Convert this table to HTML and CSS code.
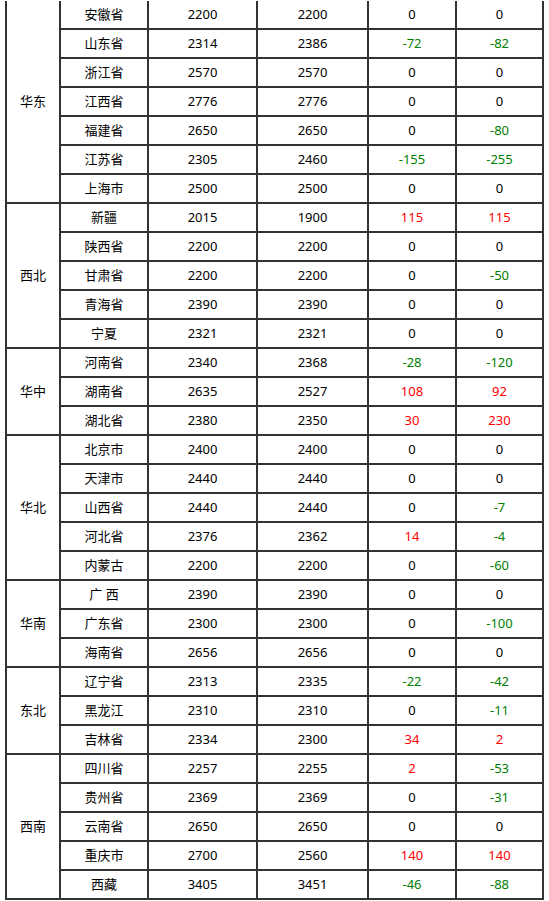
FILE: index.html
```html
<!DOCTYPE html>
<html lang="zh-CN">
<head>
<meta charset="utf-8">
<title>价格表</title>
<link rel="stylesheet" href="styles.css">
</head>
<body>
<table class="price-table">
<colgroup>
<col class="c1"><col class="c2"><col class="c3"><col class="c4"><col class="c5"><col class="c6">
</colgroup>
<tbody>
<tr><td rowspan="7">华东</td><td>安徽省</td><td>2200</td><td>2200</td><td>0</td><td>0</td></tr>
<tr><td>山东省</td><td>2314</td><td>2386</td><td class="down">-72</td><td class="down">-82</td></tr>
<tr><td>浙江省</td><td>2570</td><td>2570</td><td>0</td><td>0</td></tr>
<tr><td>江西省</td><td>2776</td><td>2776</td><td>0</td><td>0</td></tr>
<tr><td>福建省</td><td>2650</td><td>2650</td><td>0</td><td class="down">-80</td></tr>
<tr><td>江苏省</td><td>2305</td><td>2460</td><td class="down">-155</td><td class="down">-255</td></tr>
<tr><td>上海市</td><td>2500</td><td>2500</td><td>0</td><td>0</td></tr>
<tr><td rowspan="5">西北</td><td>新疆</td><td>2015</td><td>1900</td><td class="up">115</td><td class="up">115</td></tr>
<tr><td>陕西省</td><td>2200</td><td>2200</td><td>0</td><td>0</td></tr>
<tr><td>甘肃省</td><td>2200</td><td>2200</td><td>0</td><td class="down">-50</td></tr>
<tr><td>青海省</td><td>2390</td><td>2390</td><td>0</td><td>0</td></tr>
<tr><td>宁夏</td><td>2321</td><td>2321</td><td>0</td><td>0</td></tr>
<tr><td rowspan="3">华中</td><td>河南省</td><td>2340</td><td>2368</td><td class="down">-28</td><td class="down">-120</td></tr>
<tr><td>湖南省</td><td>2635</td><td>2527</td><td class="up">108</td><td class="up">92</td></tr>
<tr><td>湖北省</td><td>2380</td><td>2350</td><td class="up">30</td><td class="up">230</td></tr>
<tr><td rowspan="5">华北</td><td>北京市</td><td>2400</td><td>2400</td><td>0</td><td>0</td></tr>
<tr><td>天津市</td><td>2440</td><td>2440</td><td>0</td><td>0</td></tr>
<tr><td>山西省</td><td>2440</td><td>2440</td><td>0</td><td class="down">-7</td></tr>
<tr><td>河北省</td><td>2376</td><td>2362</td><td class="up">14</td><td class="down">-4</td></tr>
<tr><td>内蒙古</td><td>2200</td><td>2200</td><td>0</td><td class="down">-60</td></tr>
<tr><td rowspan="3">华南</td><td>广 西</td><td>2390</td><td>2390</td><td>0</td><td>0</td></tr>
<tr><td>广东省</td><td>2300</td><td>2300</td><td>0</td><td class="down">-100</td></tr>
<tr><td>海南省</td><td>2656</td><td>2656</td><td>0</td><td>0</td></tr>
<tr><td rowspan="3">东北</td><td>辽宁省</td><td>2313</td><td>2335</td><td class="down">-22</td><td class="down">-42</td></tr>
<tr><td>黑龙江</td><td>2310</td><td>2310</td><td>0</td><td class="down">-11</td></tr>
<tr><td>吉林省</td><td>2334</td><td>2300</td><td class="up">34</td><td class="up">2</td></tr>
<tr><td rowspan="5">西南</td><td>四川省</td><td>2257</td><td>2255</td><td class="up">2</td><td class="down">-53</td></tr>
<tr><td>贵州省</td><td>2369</td><td>2369</td><td>0</td><td class="down">-31</td></tr>
<tr><td>云南省</td><td>2650</td><td>2650</td><td>0</td><td>0</td></tr>
<tr><td>重庆市</td><td>2700</td><td>2560</td><td class="up">140</td><td class="up">140</td></tr>
<tr><td>西藏</td><td>3405</td><td>3451</td><td class="down">-46</td><td class="down">-88</td></tr>
</tbody>
</table>
</body>
</html>
```
FILE: styles.css
```css
html, body {
  margin: 0;
  padding: 0;
  background: #fff;
}

.price-table {
  margin: 1px 0 0 5px;
  width: 539px;
  table-layout: fixed;
  border-collapse: separate;
  border-spacing: 0;
  border-left: 2px solid #333;
  font-family: "Noto Sans", "Noto Sans CJK SC", sans-serif;
  font-size: 13px;
  color: #000;
}

.c1 { width: 54px; }
.c2 { width: 88px; }
.c3 { width: 109px; }
.c4 { width: 111px; }
.c5 { width: 88px; }
.c6 { width: 87px; }

.price-table td {
  border-right: 2px solid #333;
  border-bottom: 2px solid #333;
  padding: 0;
  height: 27px;
  line-height: 27px;
  text-align: center;
  vertical-align: middle;
  white-space: nowrap;
}

.price-table td.down { color: #008000; }
.price-table td.up { color: #ff0000; }
```
